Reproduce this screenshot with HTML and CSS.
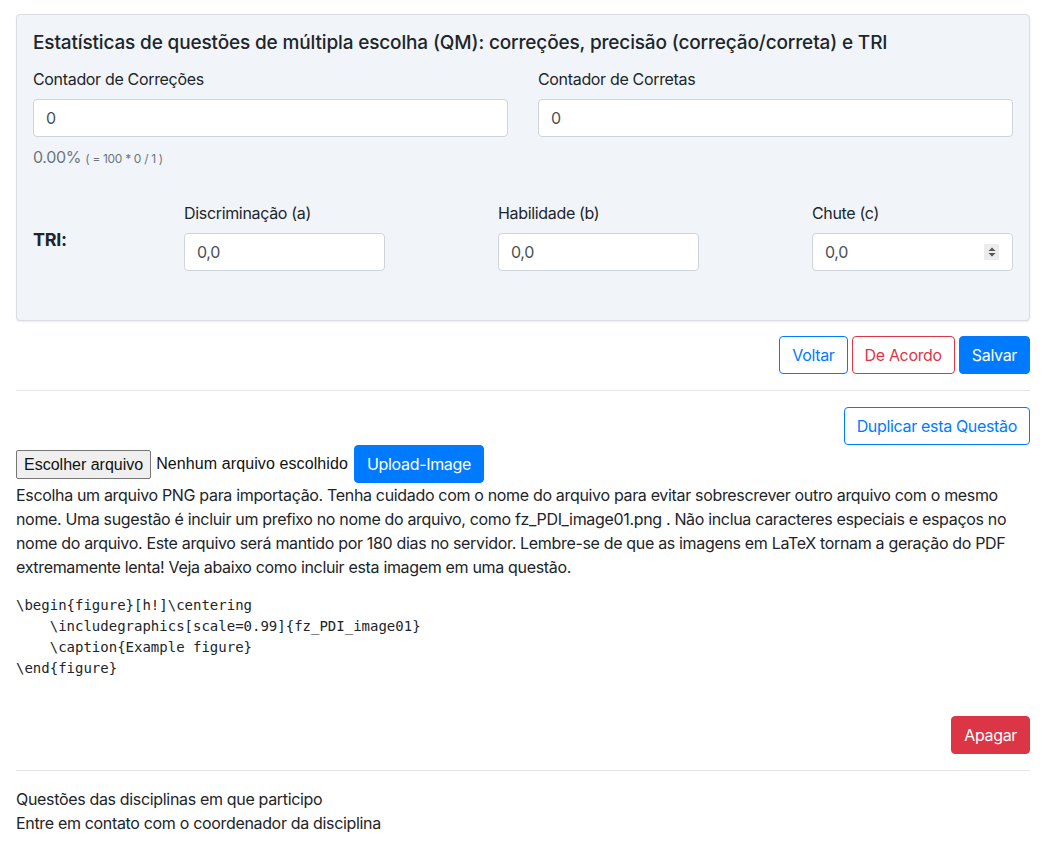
FILE: index.html
```html
<!DOCTYPE html>
<html lang="pt-BR">
<head>
<meta charset="utf-8">
<title>Questão</title>
<link rel="stylesheet" href="styles.css">
</head>
<body>
<div class="page">
  <section class="card">
    <h5 class="card-title">Estatísticas de questões de múltipla escolha (QM): correções, precisão (correção/correta) e TRI</h5>
    <div class="row-2">
      <div class="field">
        <label class="label">Contador de Correções</label>
        <input class="input" type="text" value="0">
        <div class="help">0.00% <small>( = 100 * 0 / 1 )</small></div>
      </div>
      <div class="field">
        <label class="label">Contador de Corretas</label>
        <input class="input" type="text" value="0">
      </div>
    </div>
    <div class="tri-row">
      <div class="tri-label">TRI:</div>
      <div class="field">
        <label class="label">Discriminação (a)</label>
        <input class="input input-small" type="text" value="0,0">
      </div>
      <div class="field">
        <label class="label">Habilidade (b)</label>
        <input class="input input-small" type="text" value="0,0">
      </div>
      <div class="field">
        <label class="label">Chute (c)</label>
        <div class="num-wrap">
          <input class="input input-small" type="text" value="0,0">
          <span class="spinner">
            <svg width="8" height="10" viewBox="0 0 8 10"><path d="M4 0.5 L7.5 4 H0.5 Z M4 9.5 L7.5 6 H0.5 Z" fill="#555"/></svg>
          </span>
        </div>
      </div>
    </div>
  </section>

  <div class="actions">
    <button class="btn btn-outline-primary">Voltar</button>
    <button class="btn btn-outline-danger">De Acordo</button>
    <button class="btn btn-primary">Salvar</button>
  </div>

  <hr class="divider">

  <div class="actions actions-top">
    <button class="btn btn-outline-primary">Duplicar esta Questão</button>
  </div>

  <div class="upload-row">
    <span class="file-btn">Escolher arquivo</span>
    <span class="file-name">Nenhum arquivo escolhido</span>
    <button class="btn btn-primary">Upload-Image</button>
  </div>

  <p class="desc">Escolha um arquivo PNG para importação. Tenha cuidado com o nome do arquivo para evitar sobrescrever outro arquivo com o mesmo nome. Uma sugestão é incluir um prefixo no nome do arquivo, como fz_PDI_image01.png . Não inclua caracteres especiais e espaços no nome do arquivo. Este arquivo será mantido por 180 dias no servidor. Lembre-se de que as imagens em LaTeX tornam a geração do PDF extremamente lenta! Veja abaixo como incluir esta imagem em uma questão.</p>

<pre class="code">\begin{figure}[h!]\centering
    \includegraphics[scale=0.99]{fz_PDI_image01}
    \caption{Example figure}
\end{figure}</pre>

  <div class="actions actions-delete">
    <button class="btn btn-danger">Apagar</button>
  </div>

  <hr class="divider">

  <div class="footer-text">
    <div>Questões das disciplinas em que participo</div>
    <div>Entre em contato com o coordenador da disciplina</div>
  </div>
</div>
</body>
</html>
```

FILE: styles.css
```css
* { box-sizing: border-box; }

html, body {
  margin: 0;
  padding: 0;
  background: #fff;
}

body {
  font-family: Inter, "Liberation Sans", sans-serif;
  font-size: 16px;
  line-height: 24px;
  letter-spacing: -0.33px;
  color: #212529;
}

.page {
  padding: 14px 14px 0 16px;
}

.card {
  background: #f1f5f9;
  border: 1px solid #d9dde2;
  border-radius: 4px;
  box-shadow: 0 1px 2px rgba(0, 0, 0, 0.08);
  padding: 16px 16px 49px 16px;
}

.card-title {
  margin: 0 0 12px 0;
  font-size: 19px;
  line-height: 24px;
  font-weight: 500;
  letter-spacing: -0.15px;
  color: #212529;
}

.row-2 {
  display: grid;
  grid-template-columns: 1fr 1fr;
  column-gap: 30px;
}

.field {
  display: flex;
  flex-direction: column;
}

.label {
  display: block;
  margin-bottom: 8px;
  line-height: 24px;
}

.input {
  width: 100%;
  height: 38px;
  padding: 6px 12px;
  font-family: inherit;
  font-size: 16px;
  line-height: 24px;
  letter-spacing: -0.33px;
  color: #495057;
  background: #fff;
  border: 1px solid #ced4da;
  border-radius: 4px;
  outline: none;
}

.input-small {
  width: 201px;
}

.help {
  margin-top: 8px;
  color: #6c757d;
  line-height: 24px;
}

.help small {
  font-size: 12px;
}

.tri-row {
  display: grid;
  grid-template-columns: 151px 1fr 1fr 201px;
  margin-top: 30px;
  align-items: end;
}

.tri-label {
  font-size: 18px;
  font-weight: 700;
  align-self: center;
  padding-top: 8px;
}

.num-wrap {
  position: relative;
  width: 201px;
}

.spinner {
  position: absolute;
  right: 14px;
  top: 11px;
  width: 15px;
  height: 16px;
  background: #ececec;
  display: flex;
  align-items: center;
  justify-content: center;
}

.actions {
  display: flex;
  justify-content: flex-end;
  gap: 4px;
  margin-top: 15px;
}

.actions-top {
  margin-top: 0;
}

.actions-delete {
  margin-top: 0;
}

.btn {
  font-family: inherit;
  font-size: 16px;
  line-height: 24px;
  letter-spacing: -0.33px;
  padding: 6px 12px;
  border-radius: 4px;
  border: 1px solid transparent;
  background: transparent;
  cursor: pointer;
}

.btn-primary {
  background: #007bff;
  border-color: #007bff;
  color: #fff;
}

.btn-danger {
  background: #dc3545;
  border-color: #dc3545;
  color: #fff;
}

.btn-outline-primary {
  color: #007bff;
  border-color: #007bff;
  background: #fff;
}

.btn-outline-danger {
  color: #dc3545;
  border-color: #dc3545;
  background: #fff;
}

.divider {
  margin: 16px 0;
  border: 0;
  border-top: 1px solid rgba(0, 0, 0, 0.1);
}

.upload-row {
  display: flex;
  align-items: center;
  gap: 4px;
}

.file-btn {
  display: inline-block;
  height: 29px;
  padding: 0 7px;
  line-height: 27px;
  font-size: 16px;
  letter-spacing: 0;
  color: #111;
  background: #efefef;
  border: 1px solid #767676;
  border-radius: 2px;
  font-family: "Liberation Sans", Arial, sans-serif;
}

.file-name {
  font-family: "Liberation Sans", Arial, sans-serif;
  font-size: 16px;
  letter-spacing: 0.1px;
  margin-left: 1px;
  margin-right: 2px;
  color: #111;
}

.desc {
  margin: 0 0 16px 0;
}

.code {
  margin: 0 0 37px 0;
  font-family: "DejaVu Sans Mono", monospace;
  font-size: 14px;
  line-height: 21px;
  letter-spacing: 0;
  color: #212529;
}

.footer-text {
  line-height: 24px;
}
```
